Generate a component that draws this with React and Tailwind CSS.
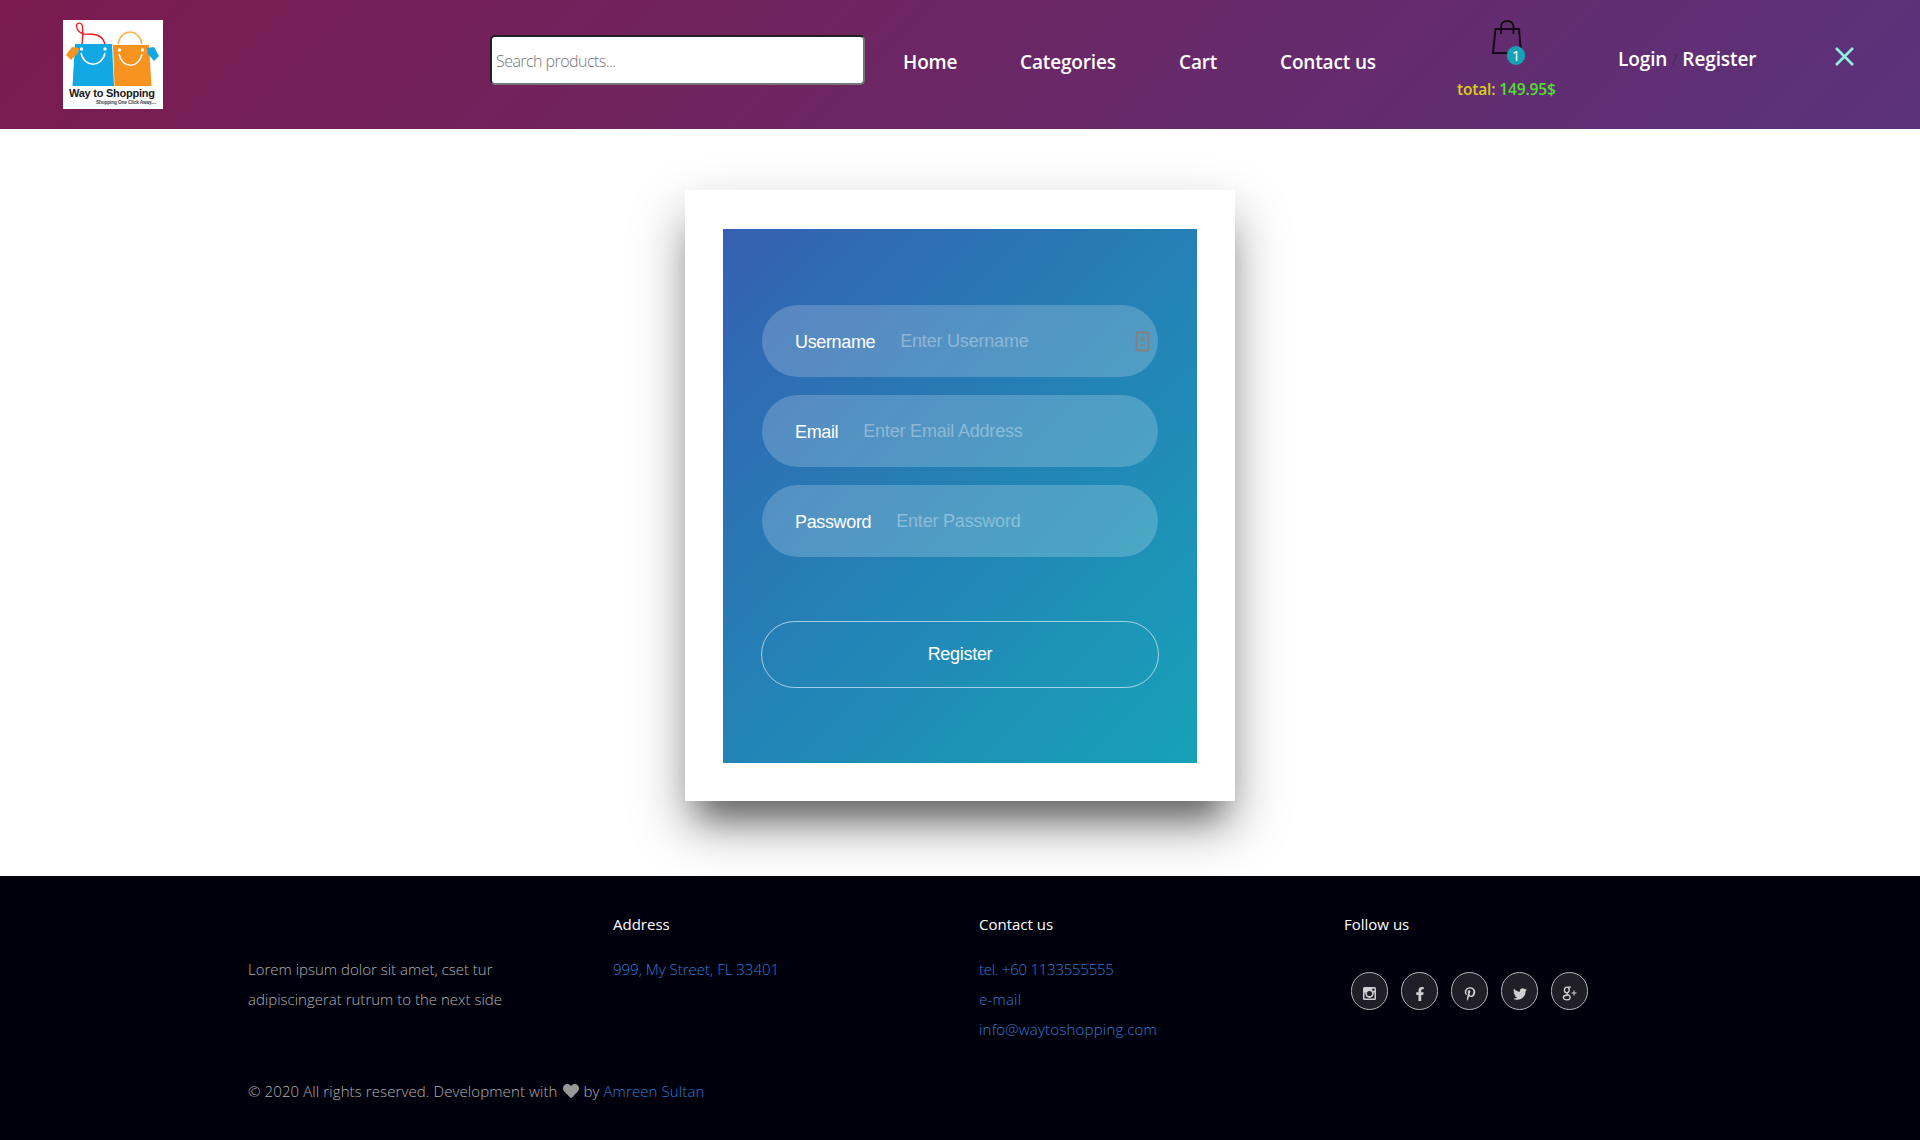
import { FaFacebookF, FaPinterestP, FaTwitter, FaHeart } from "react-icons/fa";

function Logo() {
  return (
    <svg className="block h-[89px] w-[100px] shrink-0 bg-white" viewBox="0 0 100 89" fill="none">
      <path d="M19 24 C20 16 20 11 19.500 7 C19 2 14 2 13.500 6 C14 10 17 13 21 14 C32 14 39 14 42 24" stroke="#ed1c24" strokeWidth="1.400" />
      <path d="M55 24 C58 8 76 8 79 24" stroke="#fbb04a" strokeWidth="1.500" />
      <path d="M12 24 H49 L51 66 H9.500 Z" fill="#12a8e4" />
      <path d="M50 25 H86 L88.500 66 H51.500 Z" fill="#f7931e" />
      <path d="M9 27 L16 28 L15 33 L8 40 L3 35 Z" fill="#f7931e" />
      <path d="M91 27 L84 28 L85 34 L91 41 L96 36 Z" fill="#12a8e4" />
      <path d="M18 33 C21 48 39 48 42 33" stroke="#fff" strokeWidth="1.500" />
      <path d="M56 34 C59 49 76 49 79 34" stroke="#fff" strokeWidth="1.500" />
      <circle cx="18.500" cy="29" r="1.700" fill="#fff" />
      <circle cx="42" cy="29" r="1.700" fill="#fff" />
      <circle cx="56.500" cy="30" r="1.700" fill="#fff" />
      <circle cx="79.500" cy="30" r="1.700" fill="#fff" />
      <text x="6" y="77" textLength="86" fontFamily="Liberation Sans, sans-serif" fontWeight="700" fontSize="11" fill="#1a1a1a">Way to Shopping</text>
      <text x="33" y="84" textLength="60" fontFamily="Liberation Sans, sans-serif" fontSize="4.800" fill="#444">Shopping One Click Away....</text>
    </svg>
  );
}

function Field({ label, hint, children }) {
  return (
    <label className="flex h-[72px] items-center rounded-[36px] bg-white/20 pl-[33px] pr-[8px] pt-px text-[18px]">
      <span className="mt-[2px] tracking-[-0.35px] text-white">{label}</span>
      <span className="ml-[25px] flex-1 tracking-[-0.2px] text-white/35">{hint}</span>
      {children}
    </label>
  );
}

function Instagram() {
  return (
    <svg className="h-[13px] w-[13px]" viewBox="0 0 13 13" fill="none">
      <rect width="13" height="13" rx="1.500" fill="#d0d0d0" />
      <path d="M1.500 5.500 V11.500 H11.500 V5.500 H10.300 A4 4 0 1 1 2.700 5.500 Z" fill="#201e26" stroke="none" />
      <circle cx="6.500" cy="6.500" r="4" fill="#d0d0d0" />
      <circle cx="6.500" cy="6.500" r="2.600" fill="#201e26" />
      <rect x="9.300" y="1.600" width="2.200" height="2.200" fill="#201e26" />
    </svg>
  );
}

function GooglePlus() {
  return (
    <svg className="h-[15px] w-[15px]" viewBox="0 0 15 15" fill="none" stroke="#d0d0d0" strokeWidth="1.400">
      <ellipse cx="4.800" cy="4" rx="2.400" ry="2.900" />
      <path d="M6 1.100 H9 M5.500 7 C4 8 6 8.500 7.500 9.700 C9.500 12 7.500 13.900 4.800 13.900 C1 13.900 0.500 10.500 3 9.500 C4 9 5 9 6 9" />
      <path d="M12 4.500 V9.500 M9.500 7 H14.500" strokeWidth="1.100" />
    </svg>
  );
}

function Social({ children }) {
  return (
    <span className="flex h-[38px] w-[37px] items-center justify-center rounded-full border border-[#b5b5b8] bg-[#201e26] pt-[5px] text-[14px] text-[#d0d0d0]">
      {children}
    </span>
  );
}

export default function App() {
  return (
    <div className="flex h-[1140px] w-full flex-col overflow-hidden bg-white font-['Open_Sans',sans-serif]">
      <header className="flex h-[129px] shrink-0 items-start bg-linear-[135deg,#7b1b4f,#5b327b] pl-[63px] text-[19px] leading-[27px] font-semibold text-white">
        <div className="mt-5 w-[427px]"><Logo /></div>
        <div className="mt-[35px] flex h-[50px] w-[375px] items-center rounded-[5px] border-2 border-t-[#212121] border-r-[#767676] border-b-[#767676] border-l-[#212121] bg-white pt-[2px] pl-[4px] text-[16px] font-light tracking-[-0.55px] text-[#757575]">
          Search products...
        </div>
        <nav className="mt-[49px] flex whitespace-nowrap tracking-[-0.15px]">
          <a className="ml-[38px] w-[117px]">Home</a>
          <a className="w-[159px]">Categories</a>
          <a className="w-[101px]">Cart</a>
          <a className="w-[177px]">Contact us</a>
        </nav>
        <div className="mt-[19px] w-[161px] whitespace-nowrap">
          <div className="relative ml-[34px] h-[46px] w-[34px]">
            <svg className="h-[36px] w-[32px]" viewBox="0 0 32 36" fill="none" stroke="#160a18" strokeWidth="2">
              <path d="M4.500 10 H28 L30 34 H2 Z" />
              <path d="M10 15 V8 C10 0 22.500 0 22.500 8 V15" />
            </svg>
            <span className="absolute left-[16px] top-[27px] flex h-[19px] w-[18px] items-center justify-center rounded-full bg-[#17a2b8] text-[15px] font-normal leading-none">1</span>
          </div>
          <div className="mt-[14px] text-[15.500px] leading-[20px] tracking-[-0.15px] text-[#dbce1b]">
            total: <span className="text-[#4fe02c]">149.95$</span>
          </div>
        </div>
        <div className="mt-[46px] flex w-[217px] whitespace-nowrap tracking-[-0.1px]">
          <a>Login</a>
          <span className="mx-[5px] text-[15px] font-light text-[#3a2348]">/</span>
          <a>Register</a>
        </div>
        <svg className="mt-[47px] h-[19px] w-[19px]" viewBox="0 0 19 19" stroke="#8eeee4" strokeWidth="2.600">
          <path d="M1 1 L18 18 M18 1 L1 18" />
        </svg>
      </header>

      <main className="flex h-[747px] shrink-0 items-start justify-center pt-[61px]">
        <div className="h-[611px] w-[550px] bg-white px-[38px] pt-[39px] shadow-[0_25px_50px_rgba(0,0,0,0.35),0_30px_30px_-15px_rgba(0,0,0,0.42)]">
          <form className="h-[534px] bg-linear-[135deg,#3560b1,#2482b6_50%,#17a2b8] px-[38px] pt-[76px] font-['Liberation_Sans',sans-serif]">
            <div className="mx-px flex flex-col gap-[18px]">
              <Field label="Username" hint="Enter Username">
                <svg className="h-[21px] w-[15px]" viewBox="0 0 15 21" fill="none" stroke="#85817f" strokeWidth="2">
                  <rect x="1.500" y="1.500" width="12" height="18" rx="1" />
                  <path d="M7.500 4 V10 M5.500 9.500 H9.500 M5 14 H10" strokeWidth="1.500" />
                </svg>
              </Field>
              <Field label="Email" hint="Enter Email Address" />
              <Field label="Password" hint="Enter Password" />
            </div>
            <button type="button" className="mt-[64px] flex h-[67px] w-full items-center justify-center rounded-[34px] border border-white/60 text-[18px] tracking-[-0.3px] text-white">
              Register
            </button>
          </form>
        </div>
      </main>

      <footer className="flex-1 bg-[#00000d] pl-[248px] pt-[33px] text-[15px] font-light leading-[30px] text-[#b0b0b0]">
        <div className="grid h-[167px] grid-cols-[365px_366px_365px_300px]">
          <p className="pt-[45px] whitespace-nowrap">Lorem ipsum dolor sit amet, cset tur<br />adipiscingerat rutrum to the next side</p>
          <div>
            <h3 className="mb-[15px] font-normal text-white">Address</h3>
            <p className="text-[#2e7ccf]">999, My Street, FL 33401</p>
          </div>
          <div>
            <h3 className="mb-[15px] font-normal text-white">Contact us</h3>
            <p className="text-[#2e7ccf]">
              <span className="tracking-[-0.25px]">tel. +60 1133555555</span><br />
              <span className="tracking-[0.2px]">e-mail<br />info@waytoshopping.com</span>
            </p>
          </div>
          <div>
            <h3 className="font-normal text-white">Follow us</h3>
            <div className="ml-[7px] mt-[33px] flex gap-[13px]">
              <Social><Instagram /></Social>
              <Social><FaFacebookF /></Social>
              <Social><FaPinterestP /></Social>
              <Social><FaTwitter /></Social>
              <Social><GooglePlus /></Social>
            </div>
          </div>
        </div>
        <p className="flex items-center whitespace-nowrap tracking-[0.1px]">
          <span>© 2020 All rights reserved. Development with</span>
          <FaHeart className="mx-[5px] text-[16px] text-[#999]" />
          <span>by <a className="text-[#2e7ccf]">Amreen Sultan</a></span>
        </p>
      </footer>
    </div>
  );
}
